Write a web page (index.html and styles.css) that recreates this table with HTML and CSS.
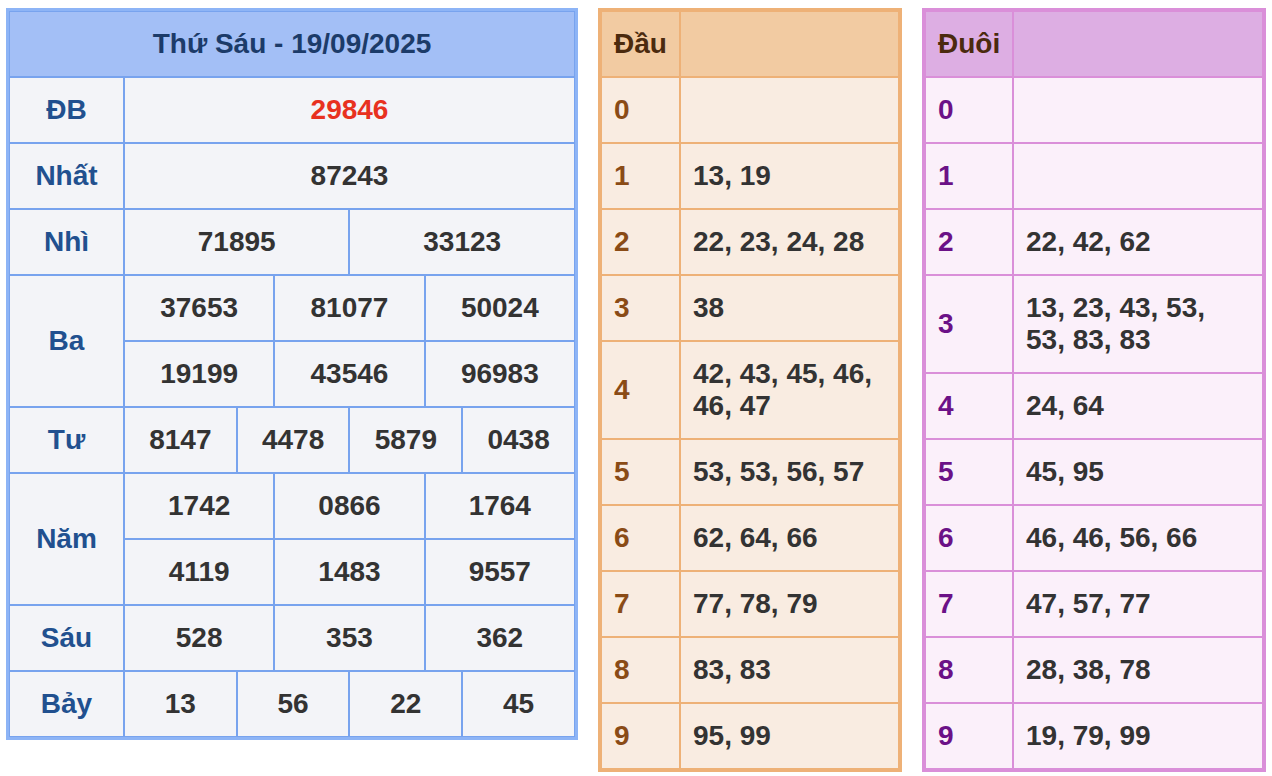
FILE: index.html
```html
<!DOCTYPE html>
<html lang="vi">
<head>
<meta charset="utf-8">
<title>XSMB Thứ Sáu 19/09/2025</title>
<link rel="stylesheet" href="styles.css">
</head>
<body>
<div class="wrap">
  <table class="kq">
    <colgroup>
      <col class="c-label">
      <col><col><col><col><col><col><col><col><col><col><col><col>
    </colgroup>
    <thead>
      <tr><th colspan="13" class="kq-title">Thứ Sáu - 19/09/2025</th></tr>
    </thead>
    <tbody>
      <tr><td class="lbl">ĐB</td><td colspan="12" class="db">29846</td></tr>
      <tr><td class="lbl">Nhất</td><td colspan="12">87243</td></tr>
      <tr><td class="lbl">Nhì</td><td colspan="6">71895</td><td colspan="6">33123</td></tr>
      <tr><td class="lbl" rowspan="2">Ba</td><td colspan="4">37653</td><td colspan="4">81077</td><td colspan="4">50024</td></tr>
      <tr><td colspan="4">19199</td><td colspan="4">43546</td><td colspan="4">96983</td></tr>
      <tr><td class="lbl">Tư</td><td colspan="3">8147</td><td colspan="3">4478</td><td colspan="3">5879</td><td colspan="3">0438</td></tr>
      <tr><td class="lbl" rowspan="2">Năm</td><td colspan="4">1742</td><td colspan="4">0866</td><td colspan="4">1764</td></tr>
      <tr><td colspan="4">4119</td><td colspan="4">1483</td><td colspan="4">9557</td></tr>
      <tr><td class="lbl">Sáu</td><td colspan="4">528</td><td colspan="4">353</td><td colspan="4">362</td></tr>
      <tr><td class="lbl">Bảy</td><td colspan="3">13</td><td colspan="3">56</td><td colspan="3">22</td><td colspan="3">45</td></tr>
    </tbody>
  </table>

  <table class="lt dau">
    <colgroup><col class="c-dau"><col></colgroup>
    <thead><tr><th>Đầu</th><th></th></tr></thead>
    <tbody>
      <tr><td class="k">0</td><td></td></tr>
      <tr><td class="k">1</td><td>13, 19</td></tr>
      <tr><td class="k">2</td><td>22, 23, 24, 28</td></tr>
      <tr><td class="k">3</td><td>38</td></tr>
      <tr><td class="k">4</td><td>42, 43, 45, 46, 46, 47</td></tr>
      <tr><td class="k">5</td><td>53, 53, 56, 57</td></tr>
      <tr><td class="k">6</td><td>62, 64, 66</td></tr>
      <tr><td class="k">7</td><td>77, 78, 79</td></tr>
      <tr><td class="k">8</td><td>83, 83</td></tr>
      <tr><td class="k">9</td><td>95, 99</td></tr>
    </tbody>
  </table>

  <table class="lt duoi">
    <colgroup><col class="c-duoi"><col></colgroup>
    <thead><tr><th>Đuôi</th><th></th></tr></thead>
    <tbody>
      <tr><td class="k">0</td><td></td></tr>
      <tr><td class="k">1</td><td></td></tr>
      <tr><td class="k">2</td><td>22, 42, 62</td></tr>
      <tr><td class="k">3</td><td>13, 23, 43, 53, 53, 83, 83</td></tr>
      <tr><td class="k">4</td><td>24, 64</td></tr>
      <tr><td class="k">5</td><td>45, 95</td></tr>
      <tr><td class="k">6</td><td>46, 46, 56, 66</td></tr>
      <tr><td class="k">7</td><td>47, 57, 77</td></tr>
      <tr><td class="k">8</td><td>28, 38, 78</td></tr>
      <tr><td class="k">9</td><td>19, 79, 99</td></tr>
    </tbody>
  </table>
</div>
</body>
</html>
```

FILE: styles.css
```css
html, body {
  margin: 0;
  padding: 0;
  background: #ffffff;
}

body {
  font-family: "Liberation Sans", Arial, sans-serif;
  font-weight: bold;
  font-size: 28px;
  color: #333333;
}

.wrap {
  display: flex;
  align-items: flex-start;
  gap: 20px;
  padding: 8px 6px;
}

table {
  border-collapse: separate;
  border-spacing: 0;
  table-layout: fixed;
}

th, td {
  padding: 16px 12px;
  line-height: 32px;
  font-weight: bold;
}

/* Results table */
.kq {
  width: 572px;
  border: 3px solid #8db4f6;
  background: #f3f4f8;
}

.kq .c-label { width: 115px; }

.kq th, .kq td {
  border: 1px solid #78a3ee;
  text-align: center;
  padding-left: 4px;
  padding-right: 4px;
}

.kq-title {
  background: #a3bff6;
  color: #1c3b69;
}

.kq .lbl {
  color: #21508f;
}

.kq .db {
  color: #e8311f;
}

/* Loto tables */
.lt th, .lt td {
  text-align: left;
}

.dau {
  width: 304px;
  border: 3px solid #eeb177;
  background: #f9ece1;
}

.dau .c-dau { width: 79px; }

.dau th, .dau td {
  border: 1px solid #eeb177;
}

.dau th {
  background: #f2cba2;
  color: #4b2a0e;
}

.dau .k {
  color: #8a4b16;
}

.duoi {
  width: 344px;
  border: 3px solid #da8fd9;
  background: #fbf0fa;
}

.duoi .c-duoi { width: 88px; }

.duoi th, .duoi td {
  border: 1px solid #da8fd9;
}

.duoi th {
  background: #ddaee3;
  color: #4b2a0e;
}

.duoi .k {
  color: #6b1187;
}
```
